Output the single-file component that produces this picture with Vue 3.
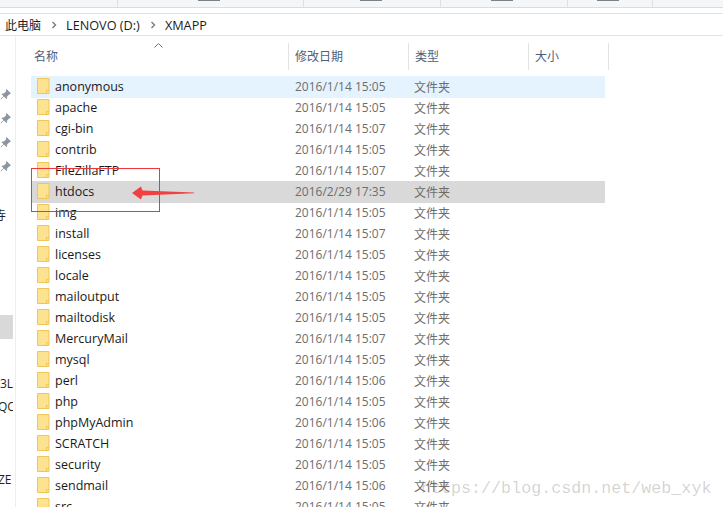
<script setup>
const pinCount = 4;
const rows = [
  ['anonymous', '2016/1/14 15:05'],
  ['apache', '2016/1/14 15:05'],
  ['cgi-bin', '2016/1/14 15:07'],
  ['contrib', '2016/1/14 15:05'],
  ['FileZillaFTP', '2016/1/14 15:07'],
  ['htdocs', '2016/2/29 17:35'],
  ['img', '2016/1/14 15:05'],
  ['install', '2016/1/14 15:07'],
  ['licenses', '2016/1/14 15:05'],
  ['locale', '2016/1/14 15:05'],
  ['mailoutput', '2016/1/14 15:05'],
  ['mailtodisk', '2016/1/14 15:05'],
  ['MercuryMail', '2016/1/14 15:07'],
  ['mysql', '2016/1/14 15:05'],
  ['perl', '2016/1/14 15:06'],
  ['php', '2016/1/14 15:05'],
  ['phpMyAdmin', '2016/1/14 15:06'],
  ['SCRATCH', '2016/1/14 15:05'],
  ['security', '2016/1/14 15:05'],
  ['sendmail', '2016/1/14 15:06'],
  ['src', '2016/1/14 15:05'],
];
const rowClass = (name) => ({ hover: name === 'anonymous', selected: name === 'htdocs' });
</script>

<template>
  <div class="explorer">
    <div class="ribbon">
      <span class="cell" style="width: 117px"></span>
      <span class="cell" style="width: 185px"><i class="cut" style="left: 80px"></i></span>
      <span class="cell" style="width: 136px"><i class="cut" style="left: 56px"></i></span>
      <span class="cell" style="width: 126px"><i class="cut" style="left: 50px"></i></span>
      <span class="cell" style="width: 84px"><i class="cut" style="left: 29px"></i></span>
    </div>
    <div class="address">
      <span class="crumb cn">此电脑</span>
      <svg class="chev" width="6" height="8" viewBox="0 0 6 8"><path d="M1.5 1l3 3-3 3" /></svg>
      <span class="crumb">LENOVO (D:)</span>
      <svg class="chev" width="6" height="8" viewBox="0 0 6 8"><path d="M1.5 1l3 3-3 3" /></svg>
      <span class="crumb">XMAPP</span>
    </div>
    <div class="body">
      <aside class="nav">
        <div class="pins">
          <svg v-for="i in pinCount" :key="i" class="pin" width="11" height="11" viewBox="0 0 10 10">
            <path d="M6 0.5l3.5 3.5-1.2.6-2.2 2.3-.3 1.8-4-4 1.8-.3 2.3-2.2zM3.4 6.6L0.8 9.2" />
          </svg>
        </div>
        <div class="nav-item cjk">寺</div>
        <div class="nav-selected"></div>
        <div class="nav-item l3">3L</div>
        <div class="nav-item l4">QC</div>
        <div class="nav-item l5">ZE</div>
      </aside>
      <main class="list">
        <div class="head">
          <svg class="sort" width="9" height="5" viewBox="0 0 9 5"><path d="M.5 4.5l4-4 4 4" /></svg>
          <div class="col name">名称</div>
          <div class="col date">修改日期</div>
          <div class="col type">类型</div>
          <div class="col size">大小</div>
        </div>
        <div class="rows">
          <div v-for="r in rows" :key="r[0]" class="row" :class="rowClass(r[0])">
            <svg class="folder" width="13" height="16" viewBox="0 0 13 16">
              <path class="f-fill" d="M.5.5h11.5v15H.5z" />
              <path class="f-line" d="M.5.5h11.5v15H.5zM9.5 15.5v-3h2.5" />
            </svg>
            <span class="fname">{{ r[0] }}</span>
            <span class="fdate">{{ r[1] }}</span>
            <span class="ftype">文件夹</span>
          </div>
        </div>
      </main>
    </div>
    <div class="mark-box"></div>
    <svg class="mark-arrow" width="62" height="14" viewBox="0 0 62 14">
      <path d="M0 7L9 .5l1.5 4L62 6.5v.8L10.5 9.5 9 13.5z" />
    </svg>
    <div class="watermark">https://blog.csdn.net/web_xyk</div>
  </div>
</template>

<style scoped>
.explorer {
  position: relative;
  width: 723px;
  height: 507px;
  overflow: hidden;
  background: #fff;
  font-family: "Open Sans", "Noto Sans CJK SC", sans-serif;
  font-size: 12px;
}

.ribbon {
  display: flex;
  height: 7px;
  background: #f5f6f7;
  border-bottom: 1px solid #dcdcdc;
}

.cell {
  position: relative;
  border-right: 1px solid #dfe0e1;
}

/* bottom edge of the cropped ribbon labels */
.cut {
  position: absolute;
  top: 0;
  width: 22px;
  height: 1px;
  background: #7d828a;
}

.address {
  display: flex;
  align-items: center;
  height: 21px;
  margin-top: 5px;
  padding-left: 5px;
  border-top: 1px solid #e2e2e2;
  border-bottom: 1px solid #e2e2e2;
  color: #1c1c1c;
  font-size: 12.7px;
}

.crumb.cn {
  font-size: 12px;
}

.chev {
  margin: 0 9px 0 10px;
  fill: none;
  stroke: #7a7a7a;
  stroke-width: 1.4;
}

.body {
  display: flex;
}

.nav {
  position: relative;
  width: 15px;
  height: 471px;
  border-right: 1px solid #eeeeee;
  overflow: hidden;
  flex: none;
}

.pins {
  display: flex;
  flex-direction: column;
  gap: 13px;
  padding-top: 53px;
}

.pin {
  fill: #8b95a0;
  stroke: #8b95a0;
  stroke-width: 0.8;
}

.nav-item {
  position: absolute;
  left: 0;
  width: 13px;
  overflow: hidden;
  white-space: nowrap;
  color: #1f1f1f;
}

.cjk {
  top: 170px;
  left: -6px;
  width: 12px;
}

.l3 {
  top: 339px;
}

.l4 {
  top: 362px;
  text-indent: -2px;
}

.l5 {
  top: 435px;
  text-indent: -2px;
}

.nav-selected {
  position: absolute;
  top: 279px;
  left: 0;
  width: 13px;
  height: 24px;
  background: #d9d9d9;
}

.list {
  flex: none;
  width: 593px;
  padding-left: 15px;
}

.head {
  position: relative;
  display: flex;
  height: 33px;
  padding-top: 7px;
  color: #4c607a;
}

.sort {
  position: absolute;
  left: 123px;
  top: 7px;
  fill: none;
  stroke: #777;
}

.col {
  height: 27px;
  line-height: 27px;
  padding-left: 6px;
  border-right: 1px solid #e3e3e3;
  box-sizing: border-box;
}

.name {
  width: 258px;
  padding-left: 3px;
}

.date,
.type {
  width: 120px;
}

.size {
  width: 80px;
}

.row {
  display: flex;
  align-items: center;
  width: 574px;
  height: 21px;
  color: #6d6d6d;
}

.row.hover {
  background: #e5f3ff;
  box-shadow: 0 1px 0 #e5f3ff;
}

.row.selected {
  background: #d9d9d9;
  box-shadow: 0 1px 0 #d9d9d9;
}

.folder {
  flex: none;
  margin: 0 0 1px 6px;
}

.f-fill {
  fill: #fde28f;
}

.f-line {
  fill: none;
  stroke: #eec659;
}

.fname {
  width: 240px;
  margin-left: 5px;
  color: #1a1a1a;
  font-size: 12.5px;
}

.fdate {
  width: 120px;
}

.ftype {
  width: 80px;
  margin-left: -1px;
}

.mark-box {
  position: absolute;
  left: 31px;
  top: 168px;
  width: 127px;
  height: 42px;
  border: 1px solid #f0353b;
}

.mark-arrow {
  position: absolute;
  left: 132px;
  top: 186px;
  fill: #f04040;
}

.watermark {
  position: absolute;
  left: 421px;
  top: 479px;
  color: rgba(120, 120, 120, 0.32);
  font-family: "Liberation Mono", monospace;
  font-size: 16.7px;
  white-space: nowrap;
}
</style>
